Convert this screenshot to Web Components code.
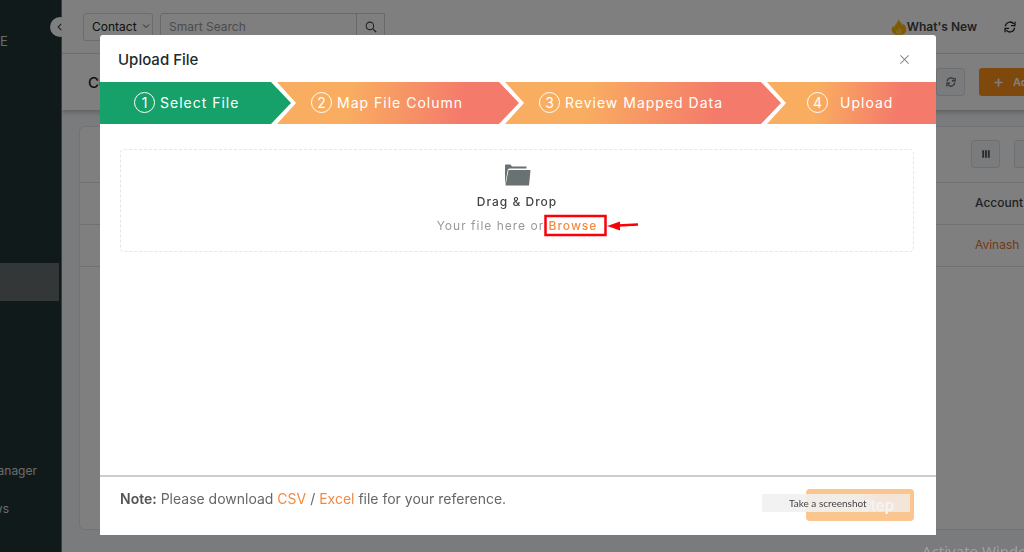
<!DOCTYPE html>
<html lang="en">
<head>
<meta charset="utf-8">
<title>Upload File</title>
<style>
html,body{margin:0;height:100%;overflow:hidden}
body{font-family:Inter,"Open Sans",sans-serif;font-size:12px;color:#222}
</style>
</head>
<body>
<crm-app></crm-app>
<upload-overlay>
  <upload-modal heading="Upload File">
    <step-bar slot="steps">
      <step-item class="first" number="1" done>Select File</step-item>
      <step-item class="second" number="2">Map File Column</step-item>
      <step-item class="third" number="3">Review Mapped Data</step-item>
      <step-item class="last" number="4">Upload</step-item>
    </step-bar>
    <drop-zone></drop-zone>
    <modal-footer slot="footer"></modal-footer>
  </upload-modal>
</upload-overlay>
<os-watermark>Activate Windows</os-watermark>
<script>
const icons = {
  left: '<path d="M10 3L5 8l5 5" fill="none" stroke="currentColor" stroke-width="1.8"/>',
  down: '<path d="M2 5l6 6 6-6" fill="none" stroke="currentColor" stroke-width="2"/>',
  search: '<circle cx="6.500" cy="6.500" r="5" fill="none" stroke="currentColor" stroke-width="1.400"/><path d="M10.200 10.200L15 15" stroke="currentColor" stroke-width="1.600"/>',
  sync: '<path d="M1.800 7A6.300 6.300 0 0 1 13 3.800M14.200 9A6.300 6.300 0 0 1 3 12.200" fill="none" stroke="currentColor" stroke-width="1.700"/><path d="M14.600 1v5.200H9.400M1.400 15V9.800h5.200" fill="none" stroke="currentColor" stroke-width="1.700"/>',
  plus: '<path d="M8 2v12M2 8h12" stroke="currentColor" stroke-width="3" stroke-linecap="round"/>',
  bars: '<path d="M3.500 2v12M8 2v12M12.500 2v12" stroke="currentColor" stroke-width="3"/>',
  close: '<path d="M2 2l12 12M14 2L2 14" stroke="currentColor" stroke-width="1.500"/>',
  flame: '<path d="M7 0c1 2.500 4.500 4 4.200 6.600.6-.4.9-1.200.9-2.100C14 6.300 15.600 8.600 15.300 11c-.4 3.200-3.400 5-7.300 5S.8 14 .7 10.900C.6 9 1.600 7.700 2.300 6.400c.2 1.200.6 1.800 1.200 2.100C3.600 5 7.500 4 7 0z" fill="#ffb400"/><path d="M8.300 8c.3 1.700 2.700 2.600 2.500 5-.1 1.800-1.300 3-2.900 3s-3.200-1-3.200-2.900c0-1.200.7-1.900 1.200-2.400.2.700.5 1 .9 1.100C6.800 10.300 8.200 9.500 8.300 8z" fill="#ffd54a"/>'
};
const icon = (name, size) => `<svg width="${size}" height="${size}" viewBox="0 0 16 16" aria-hidden="true">${icons[name]}</svg>`;
const define = (tag, render) => customElements.define(tag, class extends HTMLElement {
  constructor() {
    super();
    this.attachShadow({ mode: 'open' });
  }
  connectedCallback() {
    this.shadowRoot.innerHTML = `<style>*{box-sizing:border-box}button,input,select{font:inherit;margin:0}svg{display:block;flex:none}a{text-decoration:none}</style>` + render(this);
  }
});

define('icon-button', el => `
<style>
:host{display:block;flex:none}
button{display:flex;align-items:center;justify-content:center;width:29px;height:28px;padding:0;border:1px solid #dcdfe6;border-radius:3px;background:#f4f6fa;color:#555}
</style>
<button aria-label="${el.getAttribute('label')}">${icon(el.getAttribute('icon'), 10)}</button>`);

define('side-nav', () => `
<style>
:host{display:block;position:relative;background:#223434;color:#d8d8d8;border-right:1px solid #707878;font-size:12px}
.logo{height:263px;padding-top:32px;font-size:13px;line-height:18px}
nav{display:flex;flex-direction:column}
a{display:flex;align-items:center;justify-content:flex-end;height:38px;margin-right:2px;padding-right:22px;overflow:hidden;color:inherit}
.active{background:#686e6e;margin-bottom:150px}
.short{padding-right:50px}
button{position:absolute;top:17px;right:-9px;width:20px;height:20px;display:flex;align-items:center;justify-content:center;padding:0;border:0;border-radius:50%;background:#fff;color:#444}
</style>
<div class="logo">E</div>
<nav><a class="active" href="#" aria-label="Current page"></a><a href="#">anager</a><a class="short" href="#">ws</a></nav>
<button aria-label="Collapse menu">${icon('left', 10)}</button>`);

define('top-bar', () => `
<style>
:host{display:flex;align-items:center;height:54px;padding:0 48px 0 21px;background:#fff;border-bottom:1px solid #e4e4e4}
.pick{position:relative;margin-right:7px}
select{appearance:none;width:70px;height:28px;padding:0 8px;border:1px solid #d9d9d9;border-radius:3px;background:#fff;color:#222}
.pick svg{position:absolute;right:3px;top:9px;color:#555}
form{display:flex}
input{width:197px;height:28px;padding:0 8px;border:1px solid #d0d0d0;border-radius:3px 0 0 3px;background:#fff}
input::placeholder{color:#999;opacity:1}
form button{display:flex;align-items:center;justify-content:center;width:29px;height:28px;margin-left:-1px;padding:0;border:1px solid #d0d0d0;background:#fff;color:#444}
.news{display:flex;align-items:center;margin-left:auto;margin-right:27px;color:#444;font-weight:600}
</style>
<div class="pick"><select aria-label="Module"><option>Contact</option></select>${icon('down', 8)}</div>
<form><input type="search" aria-label="Smart Search" placeholder="Smart Search"><button type="button" aria-label="Search">${icon('search', 12)}</button></form>
<a class="news" href="#">${icon('flame', 16)}What's New</a>
${icon('sync', 12)}`);

define('title-bar', () => `
<style>
:host{display:flex;align-items:center;gap:14px;height:56px;padding-left:26px;background:#fff;box-shadow:0 2px 5px #bbb;position:relative}
h1{margin:0 auto 0 0;font-size:15px;font-weight:500}
.add{display:flex;align-items:center;gap:10px;width:85px;height:28px;padding:0 15px;border:0;border-radius:3px;background:#ff901b;color:#fff;font-weight:600;font-size:11px}
</style>
<h1>Contact</h1><icon-button icon="sync" label="Refresh"></icon-button>
<button class="add">${icon('plus', 9)}Add</button>`);

define('contact-card', () => `
<style>
:host{display:block;flex:1;margin:16px 0 22px 17px;border:1px solid #e4e6e8;border-radius:6px;background:#fff}
.tools{display:flex;justify-content:flex-end;gap:14px;height:55px;padding:13px 20px 0 0}
table{width:100%;table-layout:fixed;border-collapse:collapse}
th,td{height:42px;padding:0 0 2px;border-top:1px solid #e0e0e0;text-align:left;font-weight:500;color:#444}
tbody td{border-bottom:1px solid #e0e0e0}
.wide{width:auto}.account{width:88px}
td a{color:#e8742a;font-weight:400}
</style>
<div class="tools"><icon-button icon="bars" label="Columns"></icon-button><icon-button icon="sync" label="Reload"></icon-button></div>
<table><colgroup><col class="wide"><col class="account"></colgroup>
<thead><tr><th></th><th>Account</th></tr></thead><tbody><tr><td></td><td><a href="#">Avinash</a></td></tr></tbody></table>`);

define('crm-app', () => `
<style>
:host{display:grid;grid-template-columns:62px 1fr;width:calc(100% + 40px);min-height:100vh;background:#f4f6fa}
main{display:flex;flex-direction:column;min-width:0}
side-nav{z-index:1}
</style>
<side-nav></side-nav>
<main><top-bar></top-bar><title-bar></title-bar><contact-card></contact-card></main>`);

define('upload-overlay', () => `
<style>
:host{position:fixed;inset:0;z-index:2;display:flex;padding:35px 88px 17px 100px;box-sizing:border-box;background:rgba(0,0,0,.5)}
::slotted(*){flex:1;min-width:0}
</style><slot></slot>`);

define('upload-modal', el => `
<style>
:host{display:flex;flex-direction:column;background:#fff;border-radius:3px 3px 0 0}
header{display:flex;align-items:center;justify-content:space-between;height:47px;padding:2px 26px 0 18px}
h2{margin:0;font-size:15px;line-height:20px;font-weight:500;color:#1d2b2f}
header button{padding:0;border:0;background:none;color:#888}
.body{flex:1;padding:25px 22px 0 20px}
</style>
<header><h2>${el.getAttribute('heading')}</h2><button aria-label="Close">${icon('close', 11)}</button></header>
<slot name="steps"></slot>
<div class="body"><slot></slot></div>
<slot name="footer"></slot>`);

define('step-bar', () => `
<style>
:host{display:grid;grid-template-columns:minmax(0,191fr) minmax(0,228fr) minmax(0,262fr) minmax(0,155fr);height:42px;overflow:hidden}
::slotted(:not(.first)){margin-left:-14px}
</style><slot></slot>`);

define('step-item', el => `
<style>
:host{display:flex;align-items:center;gap:5px;min-width:0;box-sizing:border-box;padding:0 0 2px 34px;color:#fff;font-size:14px;letter-spacing:1px;white-space:nowrap;
background:linear-gradient(100deg,#f9ad60 30%,#f47b6b 76%);
clip-path:polygon(0 0,calc(100% - 20px) 0,100% 50%,calc(100% - 20px) 100%,0 100%,19px 50%)}
:host([done]){background:#16a06a;clip-path:polygon(0 0,calc(100% - 20px) 0,100% 50%,calc(100% - 20px) 100%,0 100%)}
:host(.last){padding-left:40px;gap:12px;clip-path:polygon(0 0,100% 0,100% 100%,0 100%,19px 50%)}
.n{display:flex;align-items:center;justify-content:center;flex:none;width:21px;height:21px;border:1px solid #fff;border-radius:50%;letter-spacing:0}
</style>
<span class="n">${el.getAttribute('number')}</span><span><slot></slot></span>`);

define('drop-zone', () => `
<style>
:host{display:flex;flex-direction:column;align-items:center;height:103px;padding-top:14px;box-sizing:border-box;border:1px dashed #e6e6e6;border-radius:4px;font-size:12px;letter-spacing:1px}
p{margin:0;line-height:24px;color:#999}
.title{margin-top:3px;color:#444;font-weight:500}
a{position:relative;color:#f58a42;font-weight:500}
.mark{position:absolute;left:-5px;top:-4px;overflow:visible}
</style>
<svg width="27" height="23" viewBox="0 0 27 23" aria-hidden="true"><path d="M1 21V1.500Q1 .5 2 .5h4.500l1.500 2h14.500v2H5.500Q4 4.500 3.700 6z" fill="#697173"/><path d="M4.500 6h22L25 21.500H1.500z" fill="#697173"/></svg>
<p class="title">Drag &amp; Drop</p>
<p>Your file here or <a href="#">Browse<svg class="mark" width="95" height="24" viewBox="0 0 95 24" aria-hidden="true"><rect x="1.500" y="2" width="60" height="19" fill="none" stroke="#fb0007" stroke-width="2.500"/><path d="M74 11.500L94 10.500" stroke="#fb0007" stroke-width="2.500"/><path d="M63 12l13-4.500v9z" fill="#fb0007"/></svg></a></p>`);

define('modal-footer', () => `
<style>
:host{display:flex;justify-content:space-between;height:60px;padding:12px 22px 0 20px;box-sizing:border-box;border-top:2px solid #ccc}
p{margin:0;font-size:14px;line-height:20px;color:#666}
b{font-weight:600;color:#555}
p a{color:#f58a42}
.action{position:relative}
.next{width:108px;height:32px;padding:0 20px;border:0;border-radius:4px;background:#fac58f;color:#fff;font-size:15px;font-weight:600;text-align:right}
.tip{position:absolute;right:4px;top:5px;width:148px;height:18px;padding-left:27px;background:linear-gradient(90deg,rgba(240,240,240,.9) 65%,rgba(240,240,240,.75) 80%);color:#444;font:10px/18px Lato,sans-serif;white-space:nowrap}
</style>
<p><b>Note:</b> Please download <a href="#">CSV</a> / <a href="#">Excel</a> file for your reference.</p>
<div class="action"><button class="next">Step</button><span class="tip" role="tooltip">Take a screenshot</span></div>`);

define('os-watermark', () => `
<style>:host{position:fixed;right:-22px;bottom:-9px;z-index:3;color:#a0a0a0;font:15px/20px "Noto Sans",sans-serif;white-space:nowrap}</style><slot></slot>`);
</script>
</body>
</html>
